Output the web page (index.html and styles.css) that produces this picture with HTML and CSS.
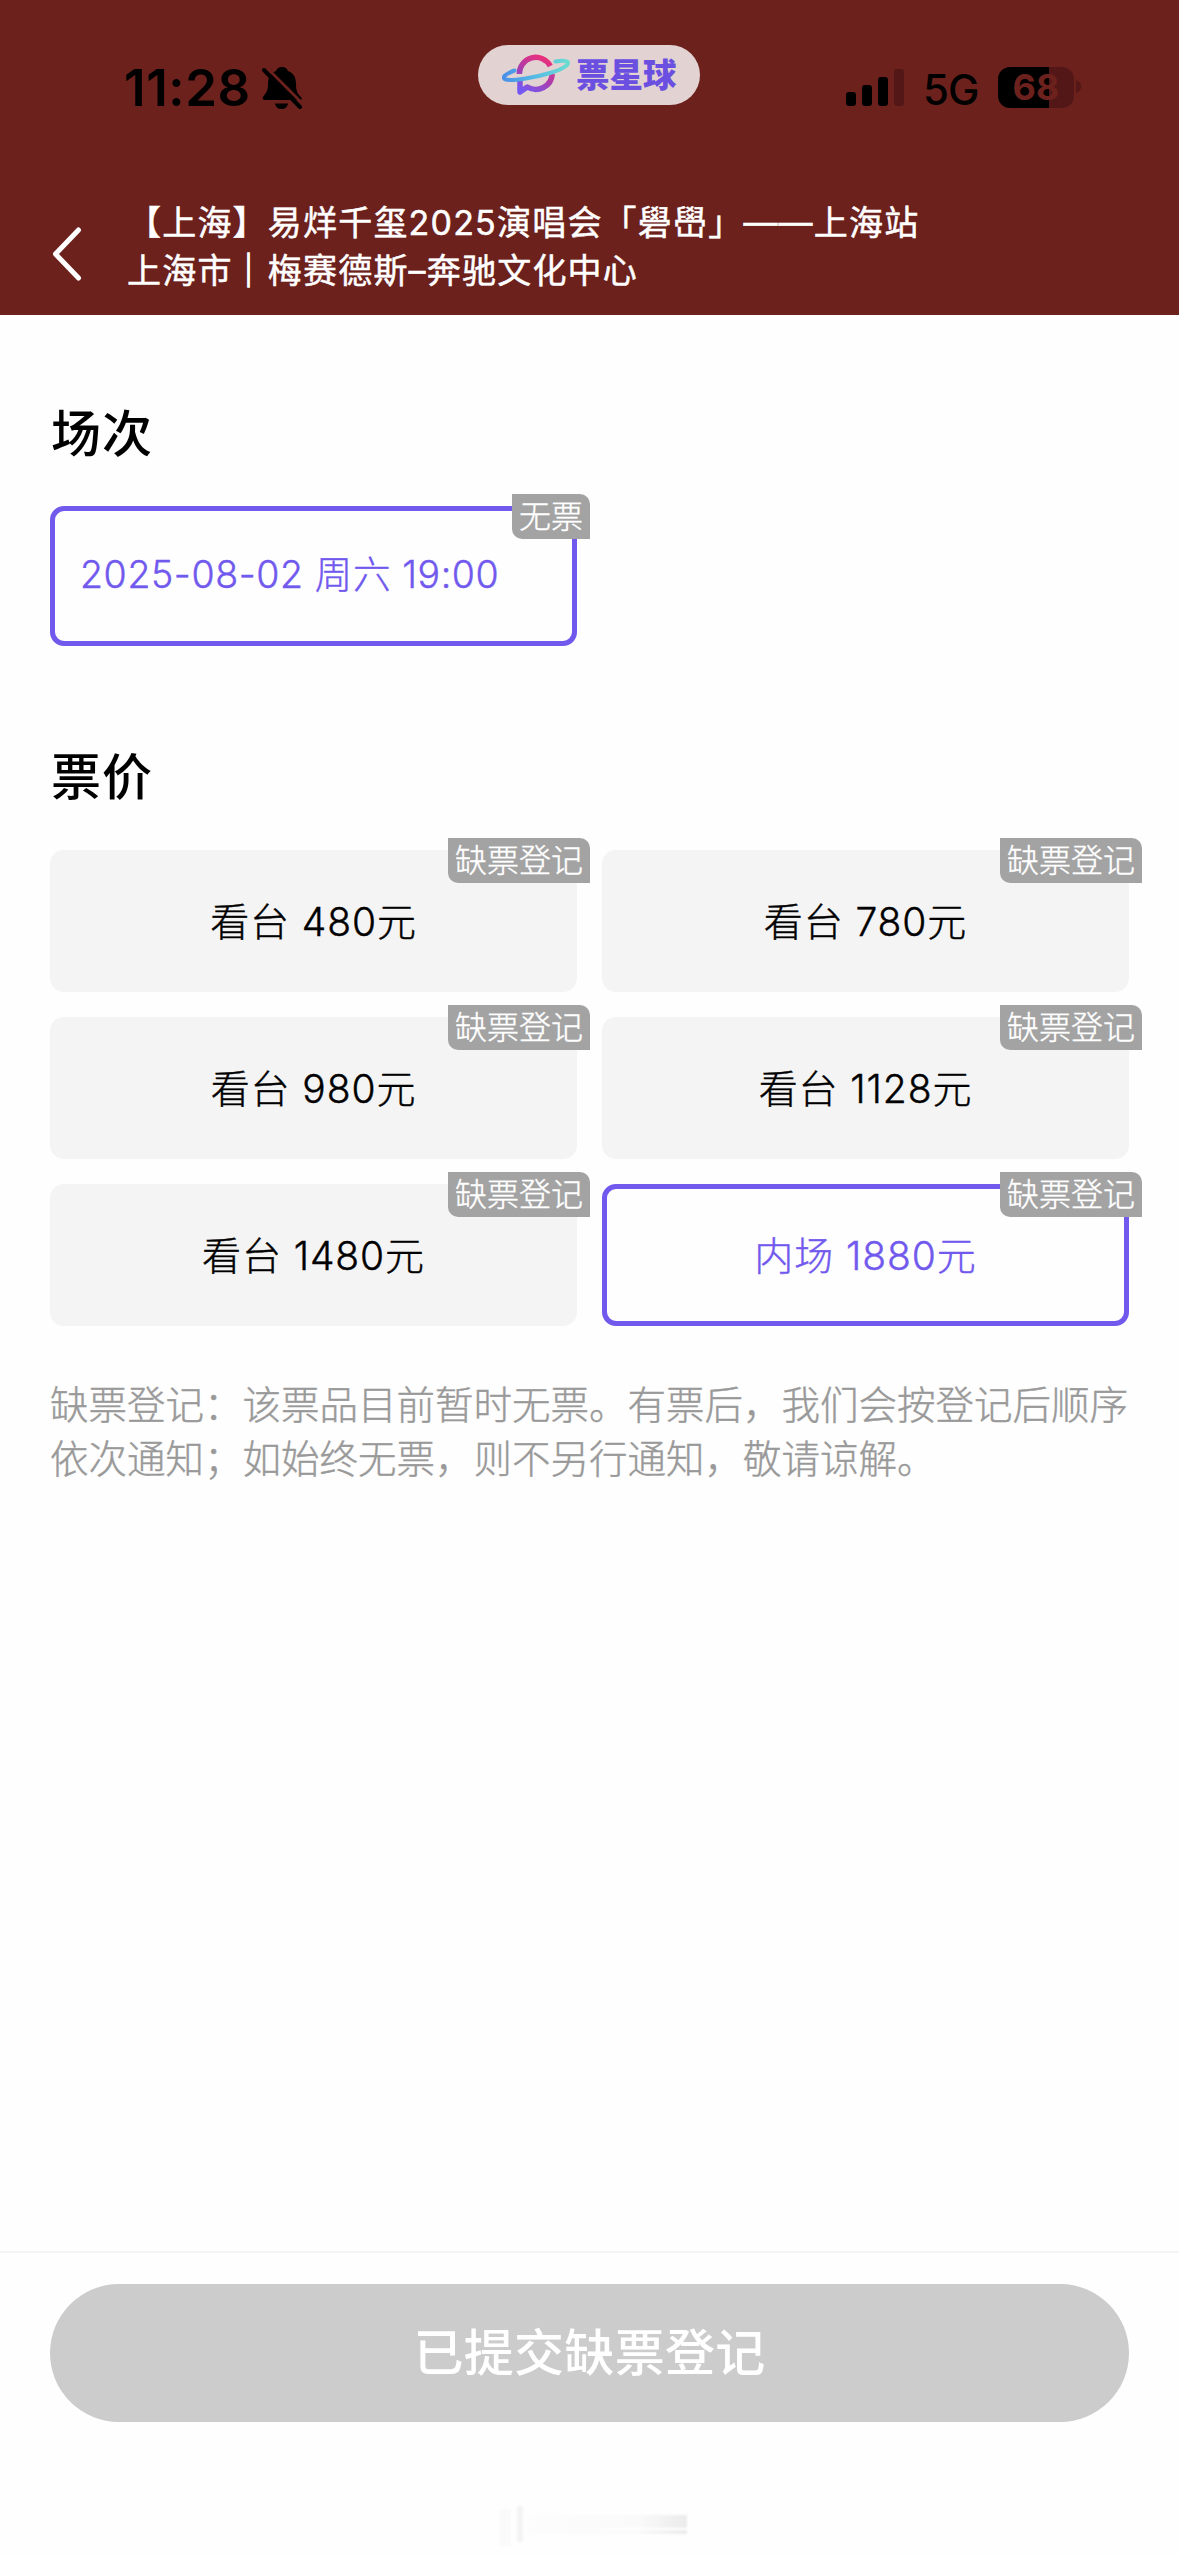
FILE: index.html
```html
<!DOCTYPE html>
<html lang="zh-CN">
<head>
<meta charset="utf-8">
<title>票星球 缺票登记</title>
<link rel="stylesheet" href="styles.css">
</head>
<body>
<header class="header">
  <div class="status">
    <div class="clock">
      <span class="time">11:28</span>
      <svg class="bell" width="42" height="44" viewBox="0 0 42 44">
        <path d="M20 1c3 0 5 1.500 6 4 6 2 8 7 8 13 0 8 2 10 5 13 1.500 2 .5 3-1 3H3c-2 0-3-1.500-2-3 3-4 5-6 5-13 0-7 3-11 8-13 1-2.500 3-4 6-4z"/>
        <path d="M13 37.500h13c-1 4-3 5.500-6.500 5.500s-5.500-1.500-6.500-5.500z"/>
        <path class="slash-gap" d="M4 1l38 38"/>
        <path class="slash" d="M2 4l36 37"/>
      </svg>
    </div>
    <div class="brand">
      <svg class="planet" width="68" height="46" viewBox="0 0 68 46">
        <defs>
          <linearGradient id="ring" x1=".7" y1="0" x2=".2" y2="1"><stop offset="0" stop-color="#e8307c"/><stop offset=".5" stop-color="#ac3dac"/><stop offset="1" stop-color="#7458f2"/></linearGradient>
          <linearGradient id="orbit" x1="0" y1="0" x2="1" y2="0"><stop offset="0" stop-color="#4a90e8"/><stop offset=".5" stop-color="#56bce4"/><stop offset="1" stop-color="#6bdcd2"/></linearGradient>
        </defs>
        <path d="M17.300 22a16.500 16.500 0 0 1 31-8M50.300 22a16.500 16.500 0 0 1-25 13L18 40V27" fill="none" stroke="url(#ring)" stroke-width="5.500" stroke-linejoin="round"/>
        <path d="M12.500 18.500C3 22-1 26 4 27.500c6 1.500 28-1.500 44-6.500C60 17.500 68 12.500 65.500 10c-1.500-1.500-6-1.500-12-.5" fill="none" stroke="url(#orbit)" stroke-width="4" stroke-linecap="round"/>
      </svg>
      <span class="brand-name">票星球</span>
    </div>
    <div class="signals">
      <svg class="bars" width="60" height="38" viewBox="0 0 60 38">
        <rect x="1" y="23" width="10" height="14" rx="3"/>
        <rect x="17" y="16" width="10" height="21" rx="3"/>
        <rect x="33" y="8" width="10" height="29" rx="3"/>
        <rect class="dim" x="49" y="0" width="10" height="37" rx="3"/>
      </svg>
      <span class="network">5G</span>
      <div class="battery"><span class="level">68</span></div>
      <svg class="nub" width="6" height="14" viewBox="0 0 6 14"><path class="dim" d="M0 0c7 3 7 10 0 13z"/></svg>
    </div>
  </div>
  <div class="nav">
    <svg class="back" width="32" height="54" viewBox="0 0 32 54"><path d="M27.500 3L4.500 27l23 24"/></svg>
    <div class="heading">
      <div class="show">【上海】易烊千玺2025演唱会「礐嶨」——上海站</div>
      <div class="venue">上海市<span class="divider">｜</span>梅赛德斯–奔驰文化中心</div>
    </div>
  </div>
</header>
<main class="content">
  <h2 class="title">场次</h2>
  <div class="grid">
    <div class="card session selected">2025-08-02 周六 19:00<span class="tag">无票</span></div>
  </div>
  <h2 class="title price-title">票价</h2>
  <div class="grid">
    <div class="card">看台 480元<span class="tag">缺票登记</span></div>
    <div class="card">看台 780元<span class="tag">缺票登记</span></div>
    <div class="card">看台 980元<span class="tag">缺票登记</span></div>
    <div class="card">看台 1128元<span class="tag">缺票登记</span></div>
    <div class="card">看台 1480元<span class="tag">缺票登记</span></div>
    <div class="card selected">内场 1880元<span class="tag">缺票登记</span></div>
  </div>
  <p class="note">缺票登记：该票品目前暂时无票。有票后，我们会按登记后顺序<br>依次通知；如始终无票，则不另行通知，敬请谅解。</p>
</main>
<footer class="footer">
  <div class="submit">已提交缺票登记</div>
  <svg class="home" width="200" height="46" viewBox="0 0 200 46">
    <defs>
      <linearGradient id="fade" x1="0" y1="0" x2="1" y2="0"><stop offset="0" stop-color="#fdfdfd"/><stop offset=".7" stop-color="#fafafa"/><stop offset="1" stop-color="#ebebeb"/></linearGradient>
      <filter id="soft"><feGaussianBlur stdDeviation="1.200"/></filter>
    </defs>
    <g filter="url(#soft)">
      <rect x="9" y="6" width="12" height="37" fill="#fafafa"/>
      <rect x="27" y="3" width="6" height="36" fill="#f4f4f4"/>
      <rect x="35" y="12" width="162" height="19" fill="url(#fade)"/>
      <rect x="110" y="25" width="88" height="2" fill="#fff"/>
    </g>
  </svg>
</footer>
</body>
</html>
```
FILE: styles.css
```css
* { box-sizing: border-box; }
body {
  margin: 0;
  width: 1179px;
  height: 2556px;
  display: flex;
  flex-direction: column;
  background: #fefefe;
  color: #000;
  font-family: Inter, "Noto Sans CJK SC", sans-serif;
  overflow: hidden;
}
.header { height: 315px; background: #6c211d; flex: none; }
.status {
  height: 180px;
  display: grid;
  grid-template-columns: 478px 222px 1fr;
  align-items: start;
}
.clock { display: flex; padding: 60px 0 0 124px; }
.time { width: 126px; font-size: 51px; font-weight: 600; line-height: 56px; letter-spacing: 0.600px; white-space: nowrap; }
.bell { margin: 6px 0 0 12px; }
.slash-gap { stroke: #6c211d; stroke-width: 3; }
.slash { stroke: #000; stroke-width: 4; stroke-linecap: round; }
.brand {
  height: 60px;
  margin-top: 45px;
  border-radius: 30px;
  background: #e2d2d1;
  display: flex;
  align-items: center;
  padding-left: 24px;
}
.brand-name { margin-left: 6px; font-size: 33.500px; font-weight: 900; color: #6a4fe0; line-height: 56px; white-space: nowrap; }
.signals { display: flex; align-items: flex-start; padding: 67px 0 0 145px; }
.bars { margin-top: 2px; }
.dim { fill: #541717; }
.network { width: 75px; margin-left: 18px; font-size: 42px; font-weight: 500; line-height: 46px; letter-spacing: -1px; }
.battery {
  width: 76px;
  height: 41px;
  border-radius: 12px;
  background: linear-gradient(90deg, #000 51px, #541717 51px);
  text-align: center;
}
.level { font-size: 36px; font-weight: 700; line-height: 41px; color: #6c211d; }
.nub { margin: 13px 0 0 2px; }
.nav { display: flex; padding-left: 51px; }
.back { margin-top: 47px; fill: none; stroke: #fff; stroke-width: 5; stroke-linecap: round; stroke-linejoin: round; }
.heading {
  margin: 19px 0 0 44px;
  color: #fff;
  font-size: 34px;
  font-weight: 400;
  letter-spacing: 1.200px;
  line-height: 48px;
  white-space: nowrap;
  -webkit-text-stroke: 0.500px currentColor;
}
.divider { margin: 0 1px 0 -1px; -webkit-text-stroke-width: 1.300px; }
.content { padding: 93px 50px 0; flex: 1; }
.title { margin: 0; height: 98px; padding-left: 1px; font-size: 50px; font-weight: 500; line-height: 52px; letter-spacing: 1px; }
.price-title { margin-top: 106px; line-height: 50px; }
.grid { display: grid; grid-template-columns: 527px 527px; gap: 25px; }
.card {
  position: relative;
  height: 142px;
  padding-bottom: 5px;
  border-radius: 14px;
  background: #f4f4f4;
  display: flex;
  align-items: center;
  justify-content: center;
  font-size: 39px;
  font-weight: 300;
  letter-spacing: 0.900px;
  white-space: pre;
  -webkit-text-stroke: 0.400px currentColor;
}
.selected { border: 5px solid #7159ee; background: #fefefe; color: #7159ee; }
.session { justify-content: flex-start; height: 140px; padding-left: 25px; padding-bottom: 9px; font-size: 37.500px; letter-spacing: 0.600px; }
.tag {
  position: absolute;
  top: -12px;
  right: -13px;
  height: 45px;
  padding: 0 7px;
  border-radius: 0 10px 0 10px;
  background: #a3a3a3;
  color: #fff;
  font-size: 32px;
  letter-spacing: 0;
  line-height: 45px;
}
.selected .tag { top: -17px; right: -18px; }
.note {
  margin: 52px 0 0;
  color: #999;
  font-size: 38.500px;
  font-weight: 300;
  line-height: 54px;
  white-space: nowrap;
  -webkit-text-stroke: 0.400px currentColor;
}
.footer { height: 305px; border-top: 2px solid #f5f5f5; padding: 31px 50px 0; flex: none; }
.submit {
  height: 138px;
  border-radius: 69px;
  background: #ccc;
  color: #fff;
  font-size: 50px;
  font-weight: 500;
  line-height: 138px;
  letter-spacing: 0.300px;
  text-align: center;
}
.home { display: block; margin: 81px 0 0 440px; }
```
